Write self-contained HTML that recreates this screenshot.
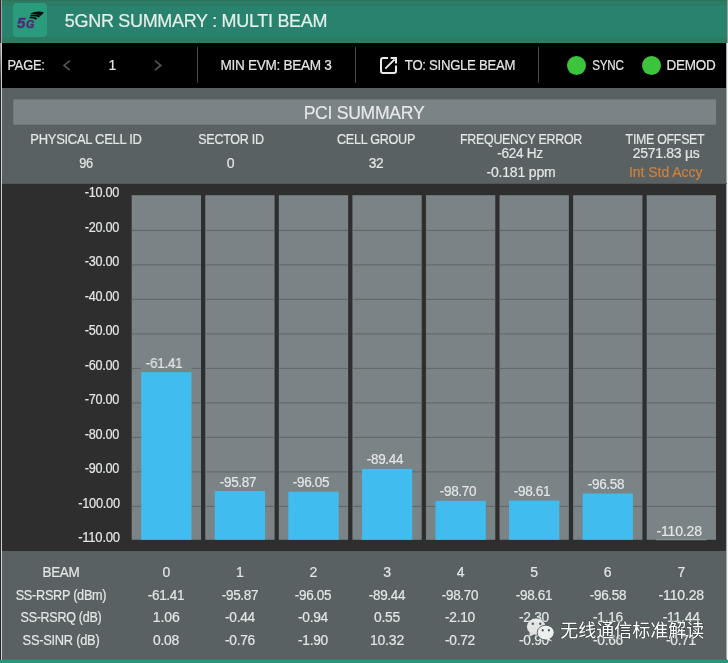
<!DOCTYPE html>
<html><head><meta charset="utf-8"><title>5GNR SUMMARY : MULTI BEAM</title>
<style>
html,body{margin:0;padding:0;background:#000;}
body{width:728px;height:663px;position:relative;overflow:hidden;font-family:"Liberation Sans", "Noto Sans CJK SC", sans-serif;}
.a{position:absolute;}
.t{position:absolute;white-space:nowrap;line-height:1;text-align:center;-webkit-text-stroke:0.2px;}
</style></head><body><div id="w" style="position:absolute;left:0;top:0;width:728px;height:663px;will-change:transform;transform:translateZ(0);">

<div class="a" style="left:2px;top:0px;width:725px;height:43px;background:#29826d;"></div>
<div class="a" style="left:2px;top:0px;width:725px;height:6px;background:#2b7c62;"></div>
<div class="a" style="left:2px;top:0px;width:725px;height:1px;background:#2d7259;"></div>
<div class="a" style="left:2px;top:37px;width:725px;height:6px;background:#2b7c62;"></div>
<div class="a" style="left:13px;top:3px;width:34px;height:34px;background:#2a9b7c;border-radius:4px;"></div>
<div class="a" style="left:2px;top:43px;width:725px;height:45px;background:#000;"></div>
<div class="a" style="left:2px;top:88px;width:725px;height:96px;background:#596163;"></div>
<div class="a" style="left:2px;top:184px;width:725px;height:367px;background:#2e2e2e;"></div>
<div class="a" style="left:2px;top:551px;width:725px;height:108px;background:#596163;"></div>
<div class="a" style="left:0px;top:0px;width:1px;height:663px;background:#2a2a2a;"></div>
<div class="a" style="left:0px;top:43px;width:1px;height:40px;background:linear-gradient(#9a9a9a,#2a2a2a);"></div>
<div class="a" style="left:1px;top:0px;width:1px;height:663px;background:#cfcdcd;"></div>
<div class="a" style="left:1px;top:0px;width:1px;height:43px;background:#a4a4a4;"></div>
<div class="a" style="left:726px;top:43px;width:1px;height:616px;background:#a6abac;"></div>
<div class="a" style="left:727px;top:0px;width:1px;height:43px;background:#9c9e9e;"></div>
<div class="a" style="left:727px;top:43px;width:1px;height:617px;background:#f2f2f2;"></div>
<div class="a" style="left:0px;top:660px;width:728px;height:3px;background:#259a7b;"></div>
<div class="a" style="left:2px;top:659px;width:725px;height:1px;background:#49726a;"></div>
<div class="a" style="left:2px;top:183px;width:725px;height:1px;background:#50575a;"></div>
<div class="a" style="left:197px;top:47px;width:1px;height:36px;background:#4a4a4a;"></div>
<div class="a" style="left:355px;top:47px;width:1px;height:36px;background:#4a4a4a;"></div>
<div class="a" style="left:538px;top:47px;width:1px;height:36px;background:#4a4a4a;"></div>
<div class="a" style="left:567.0px;top:56px;width:19px;height:19px;border-radius:50%;background:#3bc43c;"></div>
<div class="a" style="left:642.0px;top:56px;width:19px;height:19px;border-radius:50%;background:#3bc43c;"></div>
<svg class="a" style="left:0;top:0" width="728" height="663" viewBox="0 0 728 663">
<rect x="13.3" y="99.4" width="702.7" height="25.3" fill="#7a8385"/>
<rect x="131.70" y="195.2" width="69.3" height="344.60" fill="#7a8385"/>
<rect x="205.27" y="195.2" width="69.3" height="344.60" fill="#7a8385"/>
<rect x="278.84" y="195.2" width="69.3" height="344.60" fill="#7a8385"/>
<rect x="352.41" y="195.2" width="69.3" height="344.60" fill="#7a8385"/>
<rect x="425.98" y="195.2" width="69.3" height="344.60" fill="#7a8385"/>
<rect x="499.55" y="195.2" width="69.3" height="344.60" fill="#7a8385"/>
<rect x="573.12" y="195.2" width="69.3" height="344.60" fill="#7a8385"/>
<rect x="646.69" y="195.2" width="69.3" height="344.60" fill="#7a8385"/>
<rect x="131.70" y="229.90" width="69.3" height="1" fill="#5f6769"/>
<rect x="205.27" y="229.90" width="69.3" height="1" fill="#5f6769"/>
<rect x="278.84" y="229.90" width="69.3" height="1" fill="#5f6769"/>
<rect x="352.41" y="229.90" width="69.3" height="1" fill="#5f6769"/>
<rect x="425.98" y="229.90" width="69.3" height="1" fill="#5f6769"/>
<rect x="499.55" y="229.90" width="69.3" height="1" fill="#5f6769"/>
<rect x="573.12" y="229.90" width="69.3" height="1" fill="#5f6769"/>
<rect x="646.69" y="229.90" width="69.3" height="1" fill="#5f6769"/>
<rect x="131.70" y="264.40" width="69.3" height="1" fill="#5f6769"/>
<rect x="205.27" y="264.40" width="69.3" height="1" fill="#5f6769"/>
<rect x="278.84" y="264.40" width="69.3" height="1" fill="#5f6769"/>
<rect x="352.41" y="264.40" width="69.3" height="1" fill="#5f6769"/>
<rect x="425.98" y="264.40" width="69.3" height="1" fill="#5f6769"/>
<rect x="499.55" y="264.40" width="69.3" height="1" fill="#5f6769"/>
<rect x="573.12" y="264.40" width="69.3" height="1" fill="#5f6769"/>
<rect x="646.69" y="264.40" width="69.3" height="1" fill="#5f6769"/>
<rect x="131.70" y="298.90" width="69.3" height="1" fill="#5f6769"/>
<rect x="205.27" y="298.90" width="69.3" height="1" fill="#5f6769"/>
<rect x="278.84" y="298.90" width="69.3" height="1" fill="#5f6769"/>
<rect x="352.41" y="298.90" width="69.3" height="1" fill="#5f6769"/>
<rect x="425.98" y="298.90" width="69.3" height="1" fill="#5f6769"/>
<rect x="499.55" y="298.90" width="69.3" height="1" fill="#5f6769"/>
<rect x="573.12" y="298.90" width="69.3" height="1" fill="#5f6769"/>
<rect x="646.69" y="298.90" width="69.3" height="1" fill="#5f6769"/>
<rect x="131.70" y="333.40" width="69.3" height="1" fill="#5f6769"/>
<rect x="205.27" y="333.40" width="69.3" height="1" fill="#5f6769"/>
<rect x="278.84" y="333.40" width="69.3" height="1" fill="#5f6769"/>
<rect x="352.41" y="333.40" width="69.3" height="1" fill="#5f6769"/>
<rect x="425.98" y="333.40" width="69.3" height="1" fill="#5f6769"/>
<rect x="499.55" y="333.40" width="69.3" height="1" fill="#5f6769"/>
<rect x="573.12" y="333.40" width="69.3" height="1" fill="#5f6769"/>
<rect x="646.69" y="333.40" width="69.3" height="1" fill="#5f6769"/>
<rect x="131.70" y="367.90" width="69.3" height="1" fill="#5f6769"/>
<rect x="205.27" y="367.90" width="69.3" height="1" fill="#5f6769"/>
<rect x="278.84" y="367.90" width="69.3" height="1" fill="#5f6769"/>
<rect x="352.41" y="367.90" width="69.3" height="1" fill="#5f6769"/>
<rect x="425.98" y="367.90" width="69.3" height="1" fill="#5f6769"/>
<rect x="499.55" y="367.90" width="69.3" height="1" fill="#5f6769"/>
<rect x="573.12" y="367.90" width="69.3" height="1" fill="#5f6769"/>
<rect x="646.69" y="367.90" width="69.3" height="1" fill="#5f6769"/>
<rect x="131.70" y="402.40" width="69.3" height="1" fill="#5f6769"/>
<rect x="205.27" y="402.40" width="69.3" height="1" fill="#5f6769"/>
<rect x="278.84" y="402.40" width="69.3" height="1" fill="#5f6769"/>
<rect x="352.41" y="402.40" width="69.3" height="1" fill="#5f6769"/>
<rect x="425.98" y="402.40" width="69.3" height="1" fill="#5f6769"/>
<rect x="499.55" y="402.40" width="69.3" height="1" fill="#5f6769"/>
<rect x="573.12" y="402.40" width="69.3" height="1" fill="#5f6769"/>
<rect x="646.69" y="402.40" width="69.3" height="1" fill="#5f6769"/>
<rect x="131.70" y="436.90" width="69.3" height="1" fill="#5f6769"/>
<rect x="205.27" y="436.90" width="69.3" height="1" fill="#5f6769"/>
<rect x="278.84" y="436.90" width="69.3" height="1" fill="#5f6769"/>
<rect x="352.41" y="436.90" width="69.3" height="1" fill="#5f6769"/>
<rect x="425.98" y="436.90" width="69.3" height="1" fill="#5f6769"/>
<rect x="499.55" y="436.90" width="69.3" height="1" fill="#5f6769"/>
<rect x="573.12" y="436.90" width="69.3" height="1" fill="#5f6769"/>
<rect x="646.69" y="436.90" width="69.3" height="1" fill="#5f6769"/>
<rect x="131.70" y="471.40" width="69.3" height="1" fill="#5f6769"/>
<rect x="205.27" y="471.40" width="69.3" height="1" fill="#5f6769"/>
<rect x="278.84" y="471.40" width="69.3" height="1" fill="#5f6769"/>
<rect x="352.41" y="471.40" width="69.3" height="1" fill="#5f6769"/>
<rect x="425.98" y="471.40" width="69.3" height="1" fill="#5f6769"/>
<rect x="499.55" y="471.40" width="69.3" height="1" fill="#5f6769"/>
<rect x="573.12" y="471.40" width="69.3" height="1" fill="#5f6769"/>
<rect x="646.69" y="471.40" width="69.3" height="1" fill="#5f6769"/>
<rect x="131.70" y="505.90" width="69.3" height="1" fill="#5f6769"/>
<rect x="205.27" y="505.90" width="69.3" height="1" fill="#5f6769"/>
<rect x="278.84" y="505.90" width="69.3" height="1" fill="#5f6769"/>
<rect x="352.41" y="505.90" width="69.3" height="1" fill="#5f6769"/>
<rect x="425.98" y="505.90" width="69.3" height="1" fill="#5f6769"/>
<rect x="499.55" y="505.90" width="69.3" height="1" fill="#5f6769"/>
<rect x="573.12" y="505.90" width="69.3" height="1" fill="#5f6769"/>
<rect x="646.69" y="505.90" width="69.3" height="1" fill="#5f6769"/>
<rect x="141.20" y="355.16" width="50.3" height="17" fill="#7a8385"/>
<rect x="141.20" y="372.16" width="50.3" height="167.64" fill="#41bcee"/>
<rect x="214.77" y="474.05" width="50.3" height="17" fill="#7a8385"/>
<rect x="214.77" y="491.05" width="50.3" height="48.75" fill="#41bcee"/>
<rect x="288.34" y="474.67" width="50.3" height="17" fill="#7a8385"/>
<rect x="288.34" y="491.67" width="50.3" height="48.13" fill="#41bcee"/>
<rect x="361.91" y="451.87" width="50.3" height="17" fill="#7a8385"/>
<rect x="361.91" y="468.87" width="50.3" height="70.93" fill="#41bcee"/>
<rect x="435.48" y="483.81" width="50.3" height="17" fill="#7a8385"/>
<rect x="435.48" y="500.81" width="50.3" height="38.99" fill="#41bcee"/>
<rect x="509.05" y="483.50" width="50.3" height="17" fill="#7a8385"/>
<rect x="509.05" y="500.50" width="50.3" height="39.30" fill="#41bcee"/>
<rect x="582.62" y="476.50" width="50.3" height="17" fill="#7a8385"/>
<rect x="582.62" y="493.50" width="50.3" height="46.30" fill="#41bcee"/>
<rect x="656.19" y="539.20" width="50.3" height="1" fill="#939a9c"/>
</svg>
<div class="t" style="left:-4.15px;width:400px;top:12.22px;font-size:18.4px;color:#e6efec;letter-spacing:-0.300px;transform:scaleX(0.9776);">5GNR SUMMARY : MULTI BEAM</div>
<div class="t" style="left:-174.00px;width:400px;top:58.15px;font-size:14px;color:#e4e6e6;letter-spacing:-0.300px;transform:scaleX(0.9201);">PAGE:</div>
<div class="t" style="left:-87.50px;width:400px;top:58.15px;font-size:14px;color:#e4e6e6;letter-spacing:0.000px;transform:scaleX(1);">1</div>
<div class="t" style="left:75.90px;width:400px;top:58.15px;font-size:14px;color:#e4e6e6;letter-spacing:-0.300px;transform:scaleX(0.971);">MIN EVM: BEAM 3</div>
<div class="t" style="left:260.00px;width:400px;top:58.15px;font-size:14px;color:#e4e6e6;letter-spacing:-0.300px;transform:scaleX(0.9392);">TO: SINGLE BEAM</div>
<div class="t" style="left:408.05px;width:400px;top:58.15px;font-size:14px;color:#e4e6e6;letter-spacing:-0.300px;transform:scaleX(0.8294);">SYNC</div>
<div class="t" style="left:490.85px;width:400px;top:58.15px;font-size:14px;color:#e4e6e6;letter-spacing:-0.300px;transform:scaleX(0.9639);">DEMOD</div>
<div class="t" style="left:164.30px;width:400px;top:104.06px;font-size:18px;color:#e6e8e8;letter-spacing:-0.300px;transform:scaleX(0.978);">PCI SUMMARY</div>
<div class="t" style="left:-114.10px;width:400px;top:132.15px;font-size:14px;color:#e4e6e6;letter-spacing:-0.300px;transform:scaleX(0.9264);">PHYSICAL CELL ID</div>
<div class="t" style="left:-114.10px;width:400px;top:156.15px;font-size:14px;color:#e4e6e6;letter-spacing:-0.300px;transform:scaleX(0.9108);">96</div>
<div class="t" style="left:30.60px;width:400px;top:132.15px;font-size:14px;color:#e4e6e6;letter-spacing:-0.300px;transform:scaleX(0.8927);">SECTOR ID</div>
<div class="t" style="left:30.70px;width:400px;top:156.15px;font-size:14px;color:#e4e6e6;letter-spacing:0.000px;transform:scaleX(1);">0</div>
<div class="t" style="left:175.55px;width:400px;top:132.15px;font-size:14px;color:#e4e6e6;letter-spacing:-0.300px;transform:scaleX(0.9003);">CELL GROUP</div>
<div class="t" style="left:175.55px;width:400px;top:156.15px;font-size:14px;color:#e4e6e6;letter-spacing:-0.300px;transform:scaleX(0.9796);">32</div>
<div class="t" style="left:320.85px;width:400px;top:132.15px;font-size:14px;color:#e4e6e6;letter-spacing:-0.300px;transform:scaleX(0.8874);">FREQUENCY ERROR</div>
<div class="t" style="left:320.45px;width:400px;top:146.15px;font-size:14px;color:#e4e6e6;letter-spacing:-0.300px;transform:scaleX(0.9703);">-624 Hz</div>
<div class="t" style="left:320.97px;width:400px;top:165.15px;font-size:14px;color:#e4e6e6;letter-spacing:-0.167px;transform:scaleX(1.0);">-0.181 ppm</div>
<div class="t" style="left:465.15px;width:400px;top:132.15px;font-size:14px;color:#e4e6e6;letter-spacing:-0.300px;transform:scaleX(0.8822);">TIME OFFSET</div>
<div class="t" style="left:466.11px;width:400px;top:146.15px;font-size:14px;color:#e4e6e6;letter-spacing:-0.278px;transform:scaleX(1.0);">2571.83 µs</div>
<div class="t" style="left:465.73px;width:400px;top:165.15px;font-size:14px;color:#d2813a;letter-spacing:-0.045px;transform:scaleX(1.0);">Int Std Accy</div>
<div class="t" style="left:-97.75px;width:400px;top:185.15px;font-size:14px;color:#e4e6e6;letter-spacing:-0.300px;transform:scaleX(0.9039);">-10.00</div>
<div class="t" style="left:-97.75px;width:400px;top:220.15px;font-size:14px;color:#e4e6e6;letter-spacing:-0.300px;transform:scaleX(0.9039);">-20.00</div>
<div class="t" style="left:-97.75px;width:400px;top:254.15px;font-size:14px;color:#e4e6e6;letter-spacing:-0.300px;transform:scaleX(0.9039);">-30.00</div>
<div class="t" style="left:-97.75px;width:400px;top:289.15px;font-size:14px;color:#e4e6e6;letter-spacing:-0.300px;transform:scaleX(0.9039);">-40.00</div>
<div class="t" style="left:-97.75px;width:400px;top:323.15px;font-size:14px;color:#e4e6e6;letter-spacing:-0.300px;transform:scaleX(0.9039);">-50.00</div>
<div class="t" style="left:-97.75px;width:400px;top:358.15px;font-size:14px;color:#e4e6e6;letter-spacing:-0.300px;transform:scaleX(0.9039);">-60.00</div>
<div class="t" style="left:-97.75px;width:400px;top:392.15px;font-size:14px;color:#e4e6e6;letter-spacing:-0.300px;transform:scaleX(0.9039);">-70.00</div>
<div class="t" style="left:-97.75px;width:400px;top:427.15px;font-size:14px;color:#e4e6e6;letter-spacing:-0.300px;transform:scaleX(0.9039);">-80.00</div>
<div class="t" style="left:-97.75px;width:400px;top:461.15px;font-size:14px;color:#e4e6e6;letter-spacing:-0.300px;transform:scaleX(0.9039);">-90.00</div>
<div class="t" style="left:-101.50px;width:400px;top:496.15px;font-size:14px;color:#e4e6e6;letter-spacing:-0.300px;transform:scaleX(0.9156);">-100.00</div>
<div class="t" style="left:-101.50px;width:400px;top:530.15px;font-size:14px;color:#e4e6e6;letter-spacing:-0.300px;transform:scaleX(0.9358);">-110.00</div>
<div class="t" style="left:-35.90px;width:400px;top:356.15px;font-size:14px;color:#e4e6e6;letter-spacing:-0.300px;transform:scaleX(0.9636);">-61.41</div>
<div class="t" style="left:37.67px;width:400px;top:475.15px;font-size:14px;color:#e4e6e6;letter-spacing:-0.300px;transform:scaleX(0.9636);">-95.87</div>
<div class="t" style="left:111.24px;width:400px;top:475.15px;font-size:14px;color:#e4e6e6;letter-spacing:-0.300px;transform:scaleX(0.9636);">-96.05</div>
<div class="t" style="left:184.81px;width:400px;top:452.15px;font-size:14px;color:#e4e6e6;letter-spacing:-0.300px;transform:scaleX(0.9636);">-89.44</div>
<div class="t" style="left:258.38px;width:400px;top:484.15px;font-size:14px;color:#e4e6e6;letter-spacing:-0.300px;transform:scaleX(0.9636);">-98.70</div>
<div class="t" style="left:331.95px;width:400px;top:484.15px;font-size:14px;color:#e4e6e6;letter-spacing:-0.300px;transform:scaleX(0.9636);">-98.61</div>
<div class="t" style="left:405.52px;width:400px;top:477.15px;font-size:14px;color:#e4e6e6;letter-spacing:-0.300px;transform:scaleX(0.9636);">-96.58</div>
<div class="t" style="left:479.16px;width:400px;top:524.15px;font-size:14px;color:#e4e6e6;letter-spacing:-0.163px;transform:scaleX(1.0);">-110.28</div>
<div class="t" style="left:-139.05px;width:400px;top:565.15px;font-size:14px;color:#e4e6e6;letter-spacing:-0.300px;transform:scaleX(0.9623);">BEAM</div>
<div class="t" style="left:-33.65px;width:400px;top:565.15px;font-size:14px;color:#e4e6e6;letter-spacing:0.000px;transform:scaleX(1);">0</div>
<div class="t" style="left:39.92px;width:400px;top:565.15px;font-size:14px;color:#e4e6e6;letter-spacing:0.000px;transform:scaleX(1);">1</div>
<div class="t" style="left:113.49px;width:400px;top:565.15px;font-size:14px;color:#e4e6e6;letter-spacing:0.000px;transform:scaleX(1);">2</div>
<div class="t" style="left:187.06px;width:400px;top:565.15px;font-size:14px;color:#e4e6e6;letter-spacing:0.000px;transform:scaleX(1);">3</div>
<div class="t" style="left:260.63px;width:400px;top:565.15px;font-size:14px;color:#e4e6e6;letter-spacing:0.000px;transform:scaleX(1);">4</div>
<div class="t" style="left:334.20px;width:400px;top:565.15px;font-size:14px;color:#e4e6e6;letter-spacing:0.000px;transform:scaleX(1);">5</div>
<div class="t" style="left:407.77px;width:400px;top:565.15px;font-size:14px;color:#e4e6e6;letter-spacing:0.000px;transform:scaleX(1);">6</div>
<div class="t" style="left:481.34px;width:400px;top:565.15px;font-size:14px;color:#e4e6e6;letter-spacing:0.000px;transform:scaleX(1);">7</div>
<div class="t" style="left:-139.05px;width:400px;top:588.15px;font-size:14px;color:#e4e6e6;letter-spacing:-0.300px;transform:scaleX(0.9054);">SS-RSRP (dBm)</div>
<div class="t" style="left:-33.80px;width:400px;top:588.15px;font-size:14px;color:#e4e6e6;letter-spacing:-0.300px;transform:scaleX(0.9636);">-61.41</div>
<div class="t" style="left:39.77px;width:400px;top:588.15px;font-size:14px;color:#e4e6e6;letter-spacing:-0.300px;transform:scaleX(0.9636);">-95.87</div>
<div class="t" style="left:113.34px;width:400px;top:588.15px;font-size:14px;color:#e4e6e6;letter-spacing:-0.300px;transform:scaleX(0.9636);">-96.05</div>
<div class="t" style="left:186.91px;width:400px;top:588.15px;font-size:14px;color:#e4e6e6;letter-spacing:-0.300px;transform:scaleX(0.9636);">-89.44</div>
<div class="t" style="left:260.48px;width:400px;top:588.15px;font-size:14px;color:#e4e6e6;letter-spacing:-0.300px;transform:scaleX(0.9636);">-98.70</div>
<div class="t" style="left:334.05px;width:400px;top:588.15px;font-size:14px;color:#e4e6e6;letter-spacing:-0.300px;transform:scaleX(0.9636);">-98.61</div>
<div class="t" style="left:407.62px;width:400px;top:588.15px;font-size:14px;color:#e4e6e6;letter-spacing:-0.300px;transform:scaleX(0.9636);">-96.58</div>
<div class="t" style="left:481.26px;width:400px;top:588.15px;font-size:14px;color:#e4e6e6;letter-spacing:-0.163px;transform:scaleX(1.0);">-110.28</div>
<div class="t" style="left:-139.05px;width:400px;top:610.15px;font-size:14px;color:#e4e6e6;letter-spacing:-0.300px;transform:scaleX(0.8931);">SS-RSRQ (dB)</div>
<div class="t" style="left:-33.68px;width:400px;top:610.15px;font-size:14px;color:#e4e6e6;letter-spacing:-0.050px;transform:scaleX(1.0);">1.06</div>
<div class="t" style="left:39.77px;width:400px;top:610.15px;font-size:14px;color:#e4e6e6;letter-spacing:-0.300px;transform:scaleX(0.9789);">-0.44</div>
<div class="t" style="left:113.34px;width:400px;top:610.15px;font-size:14px;color:#e4e6e6;letter-spacing:-0.300px;transform:scaleX(0.9789);">-0.94</div>
<div class="t" style="left:186.91px;width:400px;top:610.15px;font-size:14px;color:#e4e6e6;letter-spacing:-0.300px;transform:scaleX(0.9904);">0.55</div>
<div class="t" style="left:260.48px;width:400px;top:610.15px;font-size:14px;color:#e4e6e6;letter-spacing:-0.300px;transform:scaleX(0.9789);">-2.10</div>
<div class="t" style="left:334.05px;width:400px;top:610.15px;font-size:14px;color:#e4e6e6;letter-spacing:-0.300px;transform:scaleX(0.9789);">-2.30</div>
<div class="t" style="left:407.62px;width:400px;top:610.15px;font-size:14px;color:#e4e6e6;letter-spacing:-0.300px;transform:scaleX(0.9789);">-1.16</div>
<div class="t" style="left:481.20px;width:400px;top:610.15px;font-size:14px;color:#e4e6e6;letter-spacing:-0.280px;transform:scaleX(1.0);">-11.44</div>
<div class="t" style="left:-139.05px;width:400px;top:633.15px;font-size:14px;color:#e4e6e6;letter-spacing:-0.300px;transform:scaleX(0.92);">SS-SINR (dB)</div>
<div class="t" style="left:-33.80px;width:400px;top:633.15px;font-size:14px;color:#e4e6e6;letter-spacing:-0.300px;transform:scaleX(0.9904);">0.08</div>
<div class="t" style="left:39.77px;width:400px;top:633.15px;font-size:14px;color:#e4e6e6;letter-spacing:-0.300px;transform:scaleX(0.9789);">-0.76</div>
<div class="t" style="left:113.34px;width:400px;top:633.15px;font-size:14px;color:#e4e6e6;letter-spacing:-0.300px;transform:scaleX(0.9789);">-1.90</div>
<div class="t" style="left:186.97px;width:400px;top:633.15px;font-size:14px;color:#e4e6e6;letter-spacing:-0.175px;transform:scaleX(1.0);">10.32</div>
<div class="t" style="left:260.48px;width:400px;top:633.15px;font-size:14px;color:#e4e6e6;letter-spacing:-0.300px;transform:scaleX(0.9789);">-0.72</div>
<div class="t" style="left:334.05px;width:400px;top:633.15px;font-size:14px;color:#e4e6e6;letter-spacing:-0.300px;transform:scaleX(0.9789);">-0.90</div>
<div class="t" style="left:407.62px;width:400px;top:633.15px;font-size:14px;color:#e4e6e6;letter-spacing:-0.300px;transform:scaleX(0.9789);">-0.66</div>
<div class="t" style="left:481.19px;width:400px;top:633.15px;font-size:14px;color:#e4e6e6;letter-spacing:-0.300px;transform:scaleX(0.9789);">-0.71</div>
<svg class="a" style="left:0;top:0" width="728" height="663" viewBox="0 0 728 663">
<!-- chevrons -->
<path d="M69.8 60.6 L64 65.4 L69.8 70.2" fill="none" stroke="#565656" stroke-width="1.6"/>
<path d="M155 60.6 L160.8 65.4 L155 70.2" fill="none" stroke="#565656" stroke-width="1.6"/>
<!-- open in new icon -->
<path d="M388 58 H383 Q381 58 381 60 V71 Q381 73 383 73 H394 Q396 73 396 71 V65.5" fill="none" stroke="#eaeaea" stroke-width="2"/>
<path d="M385.3 68.7 L394.5 59.5" fill="none" stroke="#eaeaea" stroke-width="1.8"/>
<path d="M390.6 58 H396 V63.6" fill="none" stroke="#eaeaea" stroke-width="2"/>
<path d="M392.6 57.4 H396.6 V61.4 Z" fill="#eaeaea"/>
<!-- 5G logo -->
<text x="17.1" y="27.7" font-family="Liberation Sans, sans-serif" font-weight="bold" font-style="italic" font-size="15" fill="#4e2c78" stroke="#4e2c78" stroke-width="0.5">5</text>
<text x="26" y="27.7" font-family="Liberation Sans, sans-serif" font-weight="bold" font-style="italic" font-size="10.8" fill="#4e2c78" stroke="#4e2c78" stroke-width="0.4">G</text>
<g fill="#040d0a">
<path d="M30.8 13.5 Q36.5 10.2 43.8 12.3 Q42.8 14.9 40.2 15.9 Q36 13.3 31 14.4 Z"/>
<path d="M29.9 15.4 Q35.2 13.2 40.4 15.9 L38.8 17.5 Q34.6 15.5 30.1 16.5 Z"/>
<path d="M29.3 17.2 Q33.4 15.9 37.4 18.3 L35.8 19.7 Q32.6 17.9 29.4 18.3 Z"/>
</g>
<!-- wechat watermark -->
<g>
<ellipse cx="536.2" cy="626.6" rx="9.5" ry="8.4" fill="#eeefef" fill-opacity="0.93" stroke="rgba(40,44,46,0.35)" stroke-width="0.6"/>
<path d="M529.6 632.6 L529.4 636.6 L534 634.6 Z" fill="#eeefef" fill-opacity="0.93"/>
<ellipse cx="545.7" cy="632.6" rx="8.5" ry="7.4" fill="#eeefef" stroke="#50585a" stroke-width="0.9"/>
<path d="M549 638.6 L552.6 641.4 L546.4 639.8 Z" fill="#eeefef"/>
<ellipse cx="532.8" cy="623.8" rx="1.1" ry="1.3" fill="#4a5254"/>
<ellipse cx="540.3" cy="623.8" rx="1.1" ry="1.3" fill="#4a5254"/>
<ellipse cx="542.7" cy="630.2" rx="1" ry="1.2" fill="#4a5254"/>
<ellipse cx="548.9" cy="630.2" rx="1" ry="1.2" fill="#4a5254"/>
</g>
<text x="560.3" y="637" font-family="Liberation Sans, Noto Sans CJK SC, sans-serif" font-size="18" fill="#ffffff" style="paint-order:stroke" stroke="rgba(40,44,46,0.55)" stroke-width="1.2">无线通信标准解读</text>
</svg>

</div></body></html>
